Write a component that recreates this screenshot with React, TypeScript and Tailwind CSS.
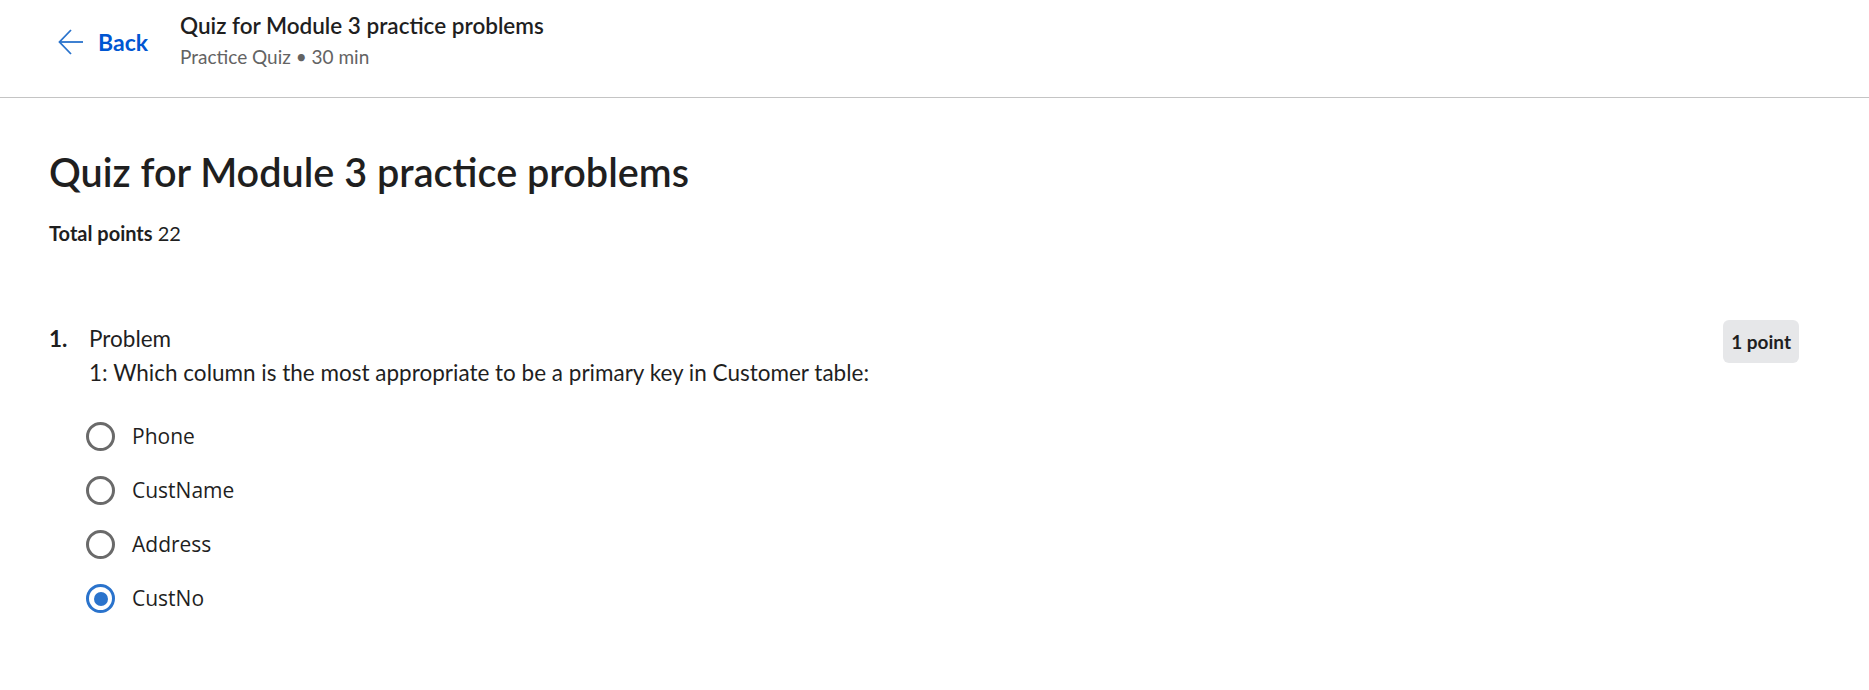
import React from "react";

const src = { fontFamily: 'Lato, "Open Sans", sans-serif' };
const seg = { fontFamily: '"Open Sans", "Noto Sans", sans-serif' };

function Radio({ checked }: { checked?: boolean }) {
  return checked ? (
    <span className="flex h-[29px] w-[29px] shrink-0 items-center justify-center rounded-full border-[3px] border-[#2a73cc]">
      <span className="h-[14px] w-[14px] rounded-full bg-[#2a73cc]" />
    </span>
  ) : (
    <span className="h-[29px] w-[29px] shrink-0 rounded-full border-[3px] border-[#6a6a6a]" />
  );
}

export default function App() {
  const options = ["Phone", "CustName", "Address", "CustNo"];
  return (
    <div className="min-h-[690px] w-full bg-white text-[#1f1f1f]" style={src}>
      <header className="flex h-[98px] items-start border-b border-[#c4c4c4]">
        <button className="ml-[58px] mt-[29px] flex items-center text-[#0056d2]">
          <svg width="26" height="26" viewBox="0 0 26 26" fill="none" stroke="#2a73cc" strokeWidth="1.8">
            <path d="M25 13H1.5" />
            <path d="M13 1L1.5 13L13 25" />
          </svg>
          <span className="ml-[14px] text-[23px] font-bold leading-[26px]">Back</span>
        </button>
        <div className="ml-[32px] mt-[12px] flex flex-col">
          <span className="text-[22.5px] font-semibold leading-[28px]">Quiz for Module 3 practice problems</span>
          <span className="mt-[4px] text-[19px] leading-[26px] text-[#636363]">Practice Quiz • 30 min</span>
        </div>
      </header>

      <main className="pl-[49px] pr-[70px]">
        <h1 className="mt-[50px] text-[39.6px] font-semibold leading-[48px]">Quiz for Module 3 practice problems</h1>
        <p className="mt-[25px] text-[20px] leading-[24px]">
          <span className="font-bold">Total points</span> 22
        </p>

        <section className="mt-[77px] flex items-start justify-between">
          <div className="flex">
            <span className="w-[40px] text-[22.5px] font-bold leading-[34px]">1.</span>
            <div className="flex flex-col">
              <span className="text-[22.5px] leading-[34px]">Problem</span>
              <span className="text-[22.5px] leading-[34px]">
                1: Which column is the most appropriate to be a primary key in Customer table:
              </span>
              <div className="ml-[-3px] mt-[32px] flex flex-col gap-[25px]" style={seg}>
                {options.map((o, i) => (
                  <label key={o} className="flex h-[29px] items-center">
                    <Radio checked={i === 3} />
                    <span className="ml-[17px] text-[21px] leading-[29px] text-[#1f1f1f]">{o}</span>
                  </label>
                ))}
              </div>
            </div>
          </div>
          <span className="mt-[-2px] rounded-[6px] bg-[#e6e7e9] px-[8px] py-[8px] text-[19px] font-bold leading-[27px]">
            1 point
          </span>
        </section>
      </main>
    </div>
  );
}
